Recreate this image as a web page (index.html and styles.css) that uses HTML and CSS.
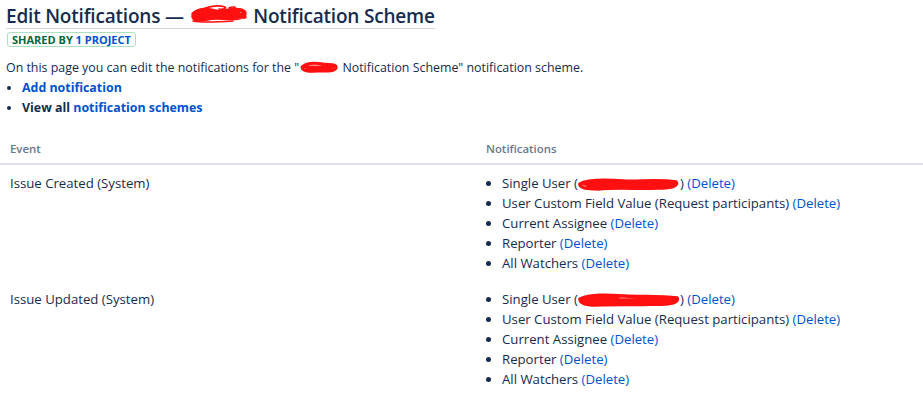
FILE: index.html
```html
<!DOCTYPE html>
<html lang="en">
  <head>
    <meta charset="UTF-8" />
    <title>Edit Notifications</title>
    <link rel="stylesheet" href="styles.css">
  </head>
  <body>
    <div class="page-header">
      <h2 class="title">
        Edit Notifications —
        <span class="redact redact-title">
          <svg width="60" height="20" viewBox="0 0 60 20"><path d="M4 9 C10 3 20 4 26 6 C34 8 40 3 52 5 C58 7 57 12 50 13 C38 15 28 11 18 14 C10 16 4 15 4 11 M7 10 L54 9 M6 13 L56 12 M8 7 L50 6" fill="none" stroke="#ff1010" stroke-width="3.5" stroke-linecap="round"/><path d="M14 4 C22 1 30 0 36 2 C38 3 34 5 30 4 M40 3 C44 1 48 2 46 5 M4 16 C14 18 30 17 44 16" fill="none" stroke="#ff1010" stroke-width="1.6" stroke-linecap="round"/></svg>
        </span>
        Notification Scheme
      </h2>
      <div>
        <span class="lozenge">Shared by <a href="#">1 project</a></span>
      </div>
      <p class="intro">
        On this page you can edit the notifications for the "<span class="redact redact-text"><svg width="40" height="12" viewBox="0 0 40 12"><path d="M3 6 C8 1 18 2 24 3 C32 4 38 3 37 7 C36 11 26 10 18 10 C10 11 3 10 3 6 M6 6 L34 6 M8 8 L32 8" fill="none" stroke="#ff1010" stroke-width="3" stroke-linecap="round"/></svg></span> Notification Scheme" notification scheme.
      </p>
      <ul class="actions">
        <li><a href="#">Add notification</a></li>
        <li>View all <a href="#">notification schemes</a></li>
      </ul>
    </div>

    <table class="notifications">
      <thead>
        <tr>
          <th class="col-event">Event</th>
          <th>Notifications</th>
        </tr>
      </thead>
      <tbody>
        <tr>
          <td>Issue Created (System)</td>
          <td>
            <ul class="notif-list">
              <li>Single User (<span class="redact redact-user"><svg width="102" height="14" viewBox="0 0 102 14"><path d="M2 7 C10 2 30 3 45 4 C60 5 80 2 98 5 C100 8 96 11 80 11 C60 12 40 10 20 12 C10 12 3 11 2 8 M6 7 L96 7 M10 9 L92 9 M14 5 L88 5" fill="none" stroke="#ff1010" stroke-width="3.5" stroke-linecap="round"/></svg></span>) <a href="#">(Delete)</a></li>
              <li>User Custom Field Value (Request participants) <a href="#">(Delete)</a></li>
              <li>Current Assignee <a href="#">(Delete)</a></li>
              <li>Reporter <a href="#">(Delete)</a></li>
              <li>All Watchers <a href="#">(Delete)</a></li>
            </ul>
          </td>
        </tr>
        <tr>
          <td>Issue Updated (System)</td>
          <td>
            <ul class="notif-list">
              <li>Single User (<span class="redact redact-user"><svg width="102" height="14" viewBox="0 0 102 14"><path d="M2 6 C12 1 30 2 46 3 C62 4 82 3 99 5 C101 9 94 12 78 11 C58 12 38 11 18 12 C8 12 2 10 2 6 M5 7 L97 7 M9 9 L93 9 M12 4 L40 4" fill="none" stroke="#ff1010" stroke-width="3.5" stroke-linecap="round"/></svg></span>) <a href="#">(Delete)</a></li>
              <li>User Custom Field Value (Request participants) <a href="#">(Delete)</a></li>
              <li>Current Assignee <a href="#">(Delete)</a></li>
              <li>Reporter <a href="#">(Delete)</a></li>
              <li>All Watchers <a href="#">(Delete)</a></li>
            </ul>
          </td>
        </tr>
      </tbody>
    </table>
  </body>
</html>
```

FILE: styles.css
```css
body {
  font-family: 'Open Sans', 'Noto Sans', sans-serif;
  font-size: 13.2px;
  line-height: 20px;
  color: #172b4d;
  margin: 0;
  background: #fff;
}

a {
  color: #0052cc;
  text-decoration: none;
}

.page-header {
  padding: 0 6px;
  font-size: 12.4px;
}

.title {
  display: inline-block;
  font-size: 19px;
  font-weight: 600;
  line-height: 24px;
  letter-spacing: -0.2px;
  margin: 4px 0 0;
  border-bottom: 1px solid #d4d4d4;
}

.redact {
  display: inline-block;
  vertical-align: middle;
}

.redact svg {
  display: block;
}

.redact-title {
  margin-top: -5px;
}

.redact-text {
  margin-top: -3px;
}

.lozenge {
  display: inline-block;
  margin-top: 3px;
  margin-left: 1px;
  padding: 0 4px;
  border: 1px solid #abdfbf;
  border-radius: 3px;
  font-size: 11px;
  font-weight: 700;
  line-height: 13px;
  text-transform: uppercase;
  color: #006644;
}

.lozenge a {
  color: #0052cc;
}

.intro {
  margin: 8px 0 0;
}

.actions {
  margin: 0;
  padding-left: 16px;
}

.actions li {
  font-weight: 700;
}

.notifications {
  width: 100%;
  border-collapse: collapse;
  margin-top: 14px;
}

.notifications th {
  text-align: left;
  font-size: 11.4px;
  font-weight: 600;
  color: #6b778c;
  padding: 7px 10px 4px;
  border-bottom: 2px solid #dfe1e6;
}

.col-event {
  width: 456px;
}

.notifications td {
  vertical-align: top;
  padding: 8px 10px;
}

.notif-list {
  margin: 0;
  padding-left: 16px;
}
```
